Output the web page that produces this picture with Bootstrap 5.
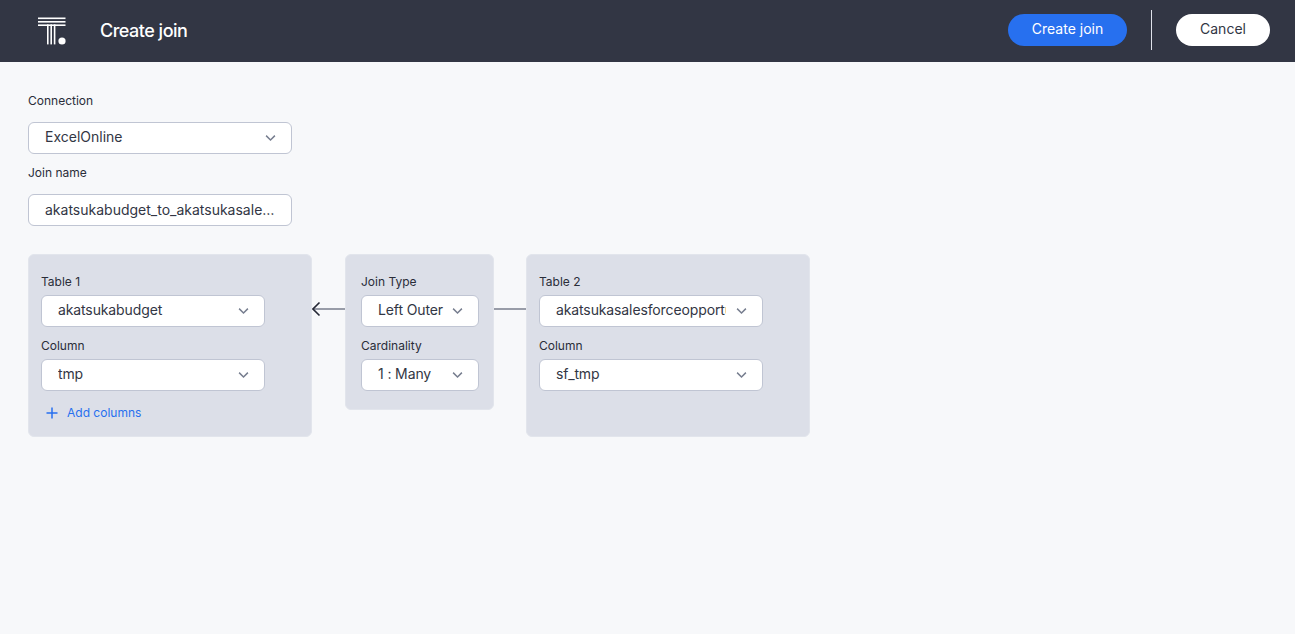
<!DOCTYPE html>
<html lang="en">
<head>
<meta charset="utf-8">
<title>Create join</title>
<link rel="stylesheet" href="https://cdn.jsdelivr.net/npm/bootstrap@5.3.0/dist/css/bootstrap.min.css">
<style>
html,body{height:100%}
body{background:#f7f8fa;font-family:Inter,"Liberation Sans",sans-serif;color:#323644;overflow:hidden}
.topbar{height:62px;background:#323644;padding:0 25px 2px 37px}
.brand-mark{width:30px;height:30px;display:block;margin-top:2px}
.page-title{color:#fff;font-size:18px;font-weight:500;letter-spacing:-.5px;margin:2px 0 0 33px;line-height:24px}
.pill{height:32px;border-radius:16px;font-size:14px;line-height:20px;padding:0 0 2px;border:0;font-weight:400}
.pill-create{width:119px;background:#2770ef;color:#fff}
.pill-cancel{width:94px;background:#fff;color:#323644}
.bar-sep{width:1px;height:40px;background:#dfe2ea;margin:0 24px}
.workspace{padding:31px 28px 0}
.field-label{display:block;font-size:12px;line-height:16px;font-weight:400;color:#2a2d39;margin:0}
.select-box,.text-box{height:32px;border:1px solid #c0c5d3;border-radius:6px;background-color:#fff;color:#323644;font-size:14px;line-height:20px;padding:0 36px 2px 16px;box-shadow:none}
.select-box{background-image:url("data:image/svg+xml,%3Csvg xmlns='http://www.w3.org/2000/svg' viewBox='0 0 12 8'%3E%3Cpath d='M1.2 1.4 6 6.2l4.800-4.800' fill='none' stroke='%23777e8f' stroke-width='1.6'/%3E%3C/svg%3E");background-size:11px 8px;background-position:right 15px center;background-repeat:no-repeat}
.text-box{padding-right:16px;text-overflow:ellipsis}
.wide-field{width:264px}
.gap-top-conn{margin-top:13px}
.gap-top-name{margin-top:11px}
.gap-name-input{margin-top:13px}
.join-row{margin-top:28px}
.join-panel{background:#dcdfe8;border:1px solid #e2e5ec;border-radius:6px}
.join-panel .select-box{letter-spacing:-.12px}
.table-panel{width:284px;height:183px;padding:19px 12px 0}
.type-panel{width:149px;height:156px;padding:19px 15px 0}
.table-field{width:224px}
.type-field{width:118px;padding-right:30px}
.panel-label{margin-bottom:5px}
.panel-second{margin-top:11px;margin-bottom:5px}
.link-arrow{width:33px;height:20px;margin-top:45px;display:block}
.link-short{width:32px}
.add-columns{color:#2770ef;font-size:12px;line-height:16px;margin-top:14px;padding-left:5px;gap:9px}
.plus-mark{width:12px;height:12px}
</style>
</head>
<body>
<header class="topbar d-flex align-items-center">
  <svg class="brand-mark" viewBox="0 0 30 30" aria-hidden="true">
    <g fill="#fff">
      <rect x="1" y="1.5" width="27.500" height="1.6"/>
      <rect x="1" y="5" width="27.500" height="1.6"/>
      <rect x="1" y="8.400" width="27.500" height="1.6"/>
      <rect x="10" y="8.400" width="1.6" height="20"/>
      <rect x="13.400" y="8.400" width="1.6" height="20"/>
      <rect x="16.800" y="8.400" width="1.6" height="20"/>
      <circle cx="25" cy="25" r="3.6"/>
    </g>
  </svg>
  <h1 class="page-title">Create join</h1>
  <div class="ms-auto d-flex align-items-center">
    <button type="button" class="btn pill pill-create">Create join</button>
    <span class="bar-sep"></span>
    <button type="button" class="btn pill pill-cancel">Cancel</button>
  </div>
</header>
<main class="workspace">
  <label class="field-label" for="conn">Connection</label>
  <select id="conn" class="form-select select-box wide-field gap-top-conn"><option>ExcelOnline</option></select>
  <label class="field-label gap-top-name" for="jname">Join name</label>
  <input id="jname" class="form-control text-box wide-field gap-name-input" value="akatsukabudget_to_akatsukasalesforceopportunity">
  <div class="d-flex align-items-start join-row">
    <section class="join-panel table-panel">
      <label class="field-label panel-label">Table 1</label>
      <select class="form-select select-box table-field"><option>akatsukabudget</option></select>
      <label class="field-label panel-label panel-second">Column</label>
      <select class="form-select select-box table-field"><option>tmp</option></select>
      <div class="d-flex align-items-center add-columns">
        <svg class="plus-mark" viewBox="0 0 12 12" aria-hidden="true"><path d="M6 .5v11M.5 6h11" stroke="#2770ef" stroke-width="1.5" fill="none"/></svg>
        <span>Add columns</span>
      </div>
    </section>
    <svg class="link-arrow" viewBox="0 0 33 20" aria-hidden="true"><path d="M1 10h32" stroke="#6f7585" stroke-width="1.4" fill="none"/><path d="M7.500 3.500 1 10l6.500 6.500" stroke="#252836" stroke-width="1.6" fill="none"/></svg>
    <section class="join-panel type-panel">
      <label class="field-label panel-label">Join Type</label>
      <select class="form-select select-box type-field"><option>Left Outer</option></select>
      <label class="field-label panel-label panel-second">Cardinality</label>
      <select class="form-select select-box type-field"><option>1 : Many</option></select>
    </section>
    <svg class="link-arrow link-short" viewBox="0 0 32 20" aria-hidden="true"><path d="M0 10h32" stroke="#6f7585" stroke-width="1.4" fill="none"/></svg>
    <section class="join-panel table-panel">
      <label class="field-label panel-label">Table 2</label>
      <select class="form-select select-box table-field"><option>akatsukasalesforceopportunity</option></select>
      <label class="field-label panel-label panel-second">Column</label>
      <select class="form-select select-box table-field"><option>sf_tmp</option></select>
    </section>
  </div>
</main>
<script src="https://cdn.jsdelivr.net/npm/bootstrap@5.3.0/dist/js/bootstrap.bundle.min.js"></script>
</body>
</html>
